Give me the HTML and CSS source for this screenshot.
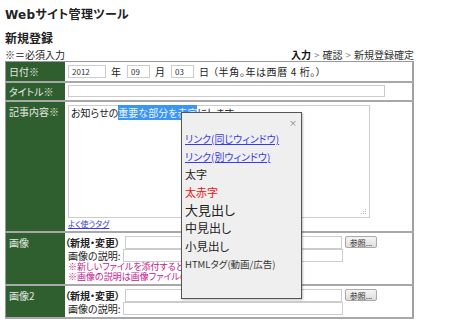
FILE: index.html
```html
<!DOCTYPE html>
<html lang="ja">
<head>
    <meta charset="UTF-8">
    <title>Webサイト管理ツール</title>
    <link rel="stylesheet" href="styles.css">
</head>
<body>
    <div class="page">
        <h1 class="site-title">Webサイト管理ツール</h1>
        <h2 class="page-title">新規登録</h2>

        <div class="form-head">
            <span>※＝必須入力</span>
            <span class="steps"><b>入力</b><i>&gt;</i>確認<i>&gt;</i>新規登録確定</span>
        </div>

        <div class="form-wrap">
            <table class="entry-form">
                <tr class="row-date">
                    <th>日付※</th>
                    <td>
                        <input type="text" class="in-year" value="2012"><span class="unit">年</span><input type="text" class="in-md" value="09"><span class="unit">月</span><input type="text" class="in-md" value="03"><span class="unit">日</span><span class="note">（半角。年は西暦 4 桁。）</span>
                    </td>
                </tr>
                <tr class="row-title">
                    <th>タイトル※</th>
                    <td><input type="text" class="in-title"></td>
                </tr>
                <tr class="row-body">
                    <th>記事内容※</th>
                    <td>
                        <div class="editor">お知らせの<span class="sel">重要な部分を赤字</span>にします
                            <svg class="grip" width="6" height="6" viewBox="0 0 6 6"><g fill="#bbb"><rect x="4" y="0" width="1" height="1"/><rect x="2" y="2" width="1" height="1"/><rect x="4" y="2" width="1" height="1"/><rect x="0" y="4" width="1" height="1"/><rect x="2" y="4" width="1" height="1"/><rect x="4" y="4" width="1" height="1"/></g></svg>
                        </div>
                        <a href="#" class="tag-link">よく使うタグ</a>
                    </td>
                </tr>
                <tr class="row-image">
                    <th>画像</th>
                    <td>
                        <div class="file-line"><b>（新規・変更）</b><input type="text" class="in-file"><button class="browse">参照...</button></div>
                        <div class="file-line">画像の説明:<input type="text" class="in-desc"></div>
                        <p class="warn">※新しいファイルを添付すると、古いファイルは削除されます。</p>
                        <p class="warn">※画像の説明は画像ファイルの代替テキストです。</p>
                    </td>
                </tr>
                <tr class="row-image">
                    <th>画像2</th>
                    <td>
                        <div class="file-line"><b>（新規・変更）</b><input type="text" class="in-file"><button class="browse">参照...</button></div>
                        <div class="file-line">画像の説明:<input type="text" class="in-desc"></div>
                    </td>
                </tr>
                <tr class="row-image">
                    <th>画像3</th>
                    <td>
                        <div class="file-line"><b>（新規・変更）</b><input type="text" class="in-file"><button class="browse">参照...</button></div>
                    </td>
                </tr>
            </table>

            <!-- タグ挿入メニュー -->
            <div class="tag-popup">
                <span class="close">×</span>
                <ul>
                    <li><a href="#">リンク(同じウィンドウ)</a></li>
                    <li><a href="#">リンク(別ウィンドウ)</a></li>
                    <li class="t-bold">太字</li>
                    <li class="t-red">太赤字</li>
                    <li class="t-h1">大見出し</li>
                    <li class="t-h2">中見出し</li>
                    <li class="t-h3">小見出し</li>
                    <li class="t-html">HTMLタグ(動画/広告)</li>
                </ul>
            </div>
        </div>
    </div>
</body>
</html>
```

FILE: styles.css
```css
body {
    margin: 0;
    background: #fff;
    color: #222;
    font-family: "Noto Sans CJK JP", sans-serif;
    font-feature-settings: "palt";
    font-size: 10px;
    overflow: hidden;
}
.page {
    padding: 0 0 0 5px;
    width: 409px;
}
.site-title {
    font-family: "DejaVu Sans", "Noto Sans CJK JP", sans-serif;
    font-size: 12px;
    line-height: 16px;
    margin: 7px 0 0 0;
    letter-spacing: 0.3px;
}
.page-title {
    font-size: 12px;
    line-height: 16px;
    margin: 7px 0 0 0;
}
.form-head {
    display: flex;
    justify-content: space-between;
    font-size: 10px;
    line-height: 12px;
    margin-top: 3px;
}
.steps {
    color: #333;
}
.steps b {
    color: #111;
}
.steps i {
    font-style: normal;
    color: #888;
    margin: 0 3px;
}
.form-wrap {
    position: relative;
}
.entry-form {
    width: 409px;
    border-collapse: collapse;
    border: 1px solid #999;
    border-right: 2px solid #a0a0a0;
}
.entry-form tr {
    border-bottom: 2px solid #a8a8a8;
}
.entry-form th {
    width: 53px;
    background-color: #2f5e2f;
    color: #e2e9e2;
    font-weight: normal;
    text-align: left;
    vertical-align: top;
    padding: 3px 3px 0 3px;
    font-size: 10px;
    line-height: 13px;
}
.entry-form td {
    vertical-align: top;
    padding: 3px 3px 3px 3px;
    line-height: 13px;
}
input {
    font-family: inherit;
    font-size: 8px;
    border: 1px solid #ccc;
    height: 13px;
    padding: 0 3px;
    margin: 0;
    box-sizing: border-box;
    vertical-align: top;
    color: #333;
}
.in-year {
    width: 38px;
}
.in-md {
    width: 23px;
}
.unit {
    margin: 0 6px 0 5px;
}
.note {
    margin-left: -2px;
    letter-spacing: 0.6px;
}
.row-title td {
    padding: 2px 3px 2px 3px;
}
.row-title th {
    padding-top: 2px;
}
.in-title {
    width: 317px;
    height: 12px;
}
.row-body td {
    padding-bottom: 2px;
}
.editor {
    position: relative;
    width: 302px;
    height: 113px;
    box-sizing: border-box;
    border: 1px solid #ccc;
    padding: 1px 2px;
    line-height: 11px;
}
.sel {
    background: #3b95f5;
    color: #eaf3ff;
}
.grip {
    position: absolute;
    right: 2px;
    bottom: 2px;
}
.tag-link {
    display: block;
    font-size: 8px;
    line-height: 10px;
    margin-top: 1px;
    color: #3a3ae0;
}
.file-line {
    height: 13px;
    white-space: nowrap;
}
.file-line b {
    margin-left: -3px;
}
.in-file {
    width: 217px;
    margin-left: 5px;
}
.in-desc {
    width: 220px;
    margin-left: 3px;
}
.browse {
    font-family: inherit;
    font-size: 8px;
    line-height: 9px;
    height: 12px;
    width: 32px;
    padding: 0;
    margin-left: 3px;
    border: 1px solid #aaa;
    border-radius: 2px;
    background: linear-gradient(#f6f6f6, #dcdcdc);
    color: #333;
    vertical-align: top;
}
.warn {
    margin: 0;
    color: #c2168d;
    font-size: 9px;
    line-height: 10px;
    height: 10px;
    white-space: nowrap;
}
.row-image td {
    padding-bottom: 2px;
}
.tag-popup {
    position: absolute;
    left: 176px;
    top: 51px;
    width: 121px;
    height: 187px;
    box-sizing: border-box;
    background: #efefef;
    border: 1px solid #555;
    box-shadow: 1px 1px 2px rgba(0,0,0,0.25);
}
.tag-popup .close {
    position: absolute;
    right: 4px;
    top: 5px;
    font-size: 8px;
    line-height: 10px;
    color: #777;
}
.tag-popup ul {
    list-style: none;
    margin: 0;
    padding: 16px 0 0 3px;
}
.tag-popup li {
    height: 18px;
    line-height: 18px;
    white-space: nowrap;
    font-size: 11px;
}
.tag-popup a {
    color: #3a3ae6;
    font-size: 10px;
}
.t-red {
    color: #f01010;
}
.t-h1 {
    font-size: 13px !important;
}
.t-h2 {
    font-size: 12px !important;
}
.t-h3 {
    font-size: 11.5px !important;
}
.t-html {
    font-size: 9.5px !important;
    color: #333;
}
```
